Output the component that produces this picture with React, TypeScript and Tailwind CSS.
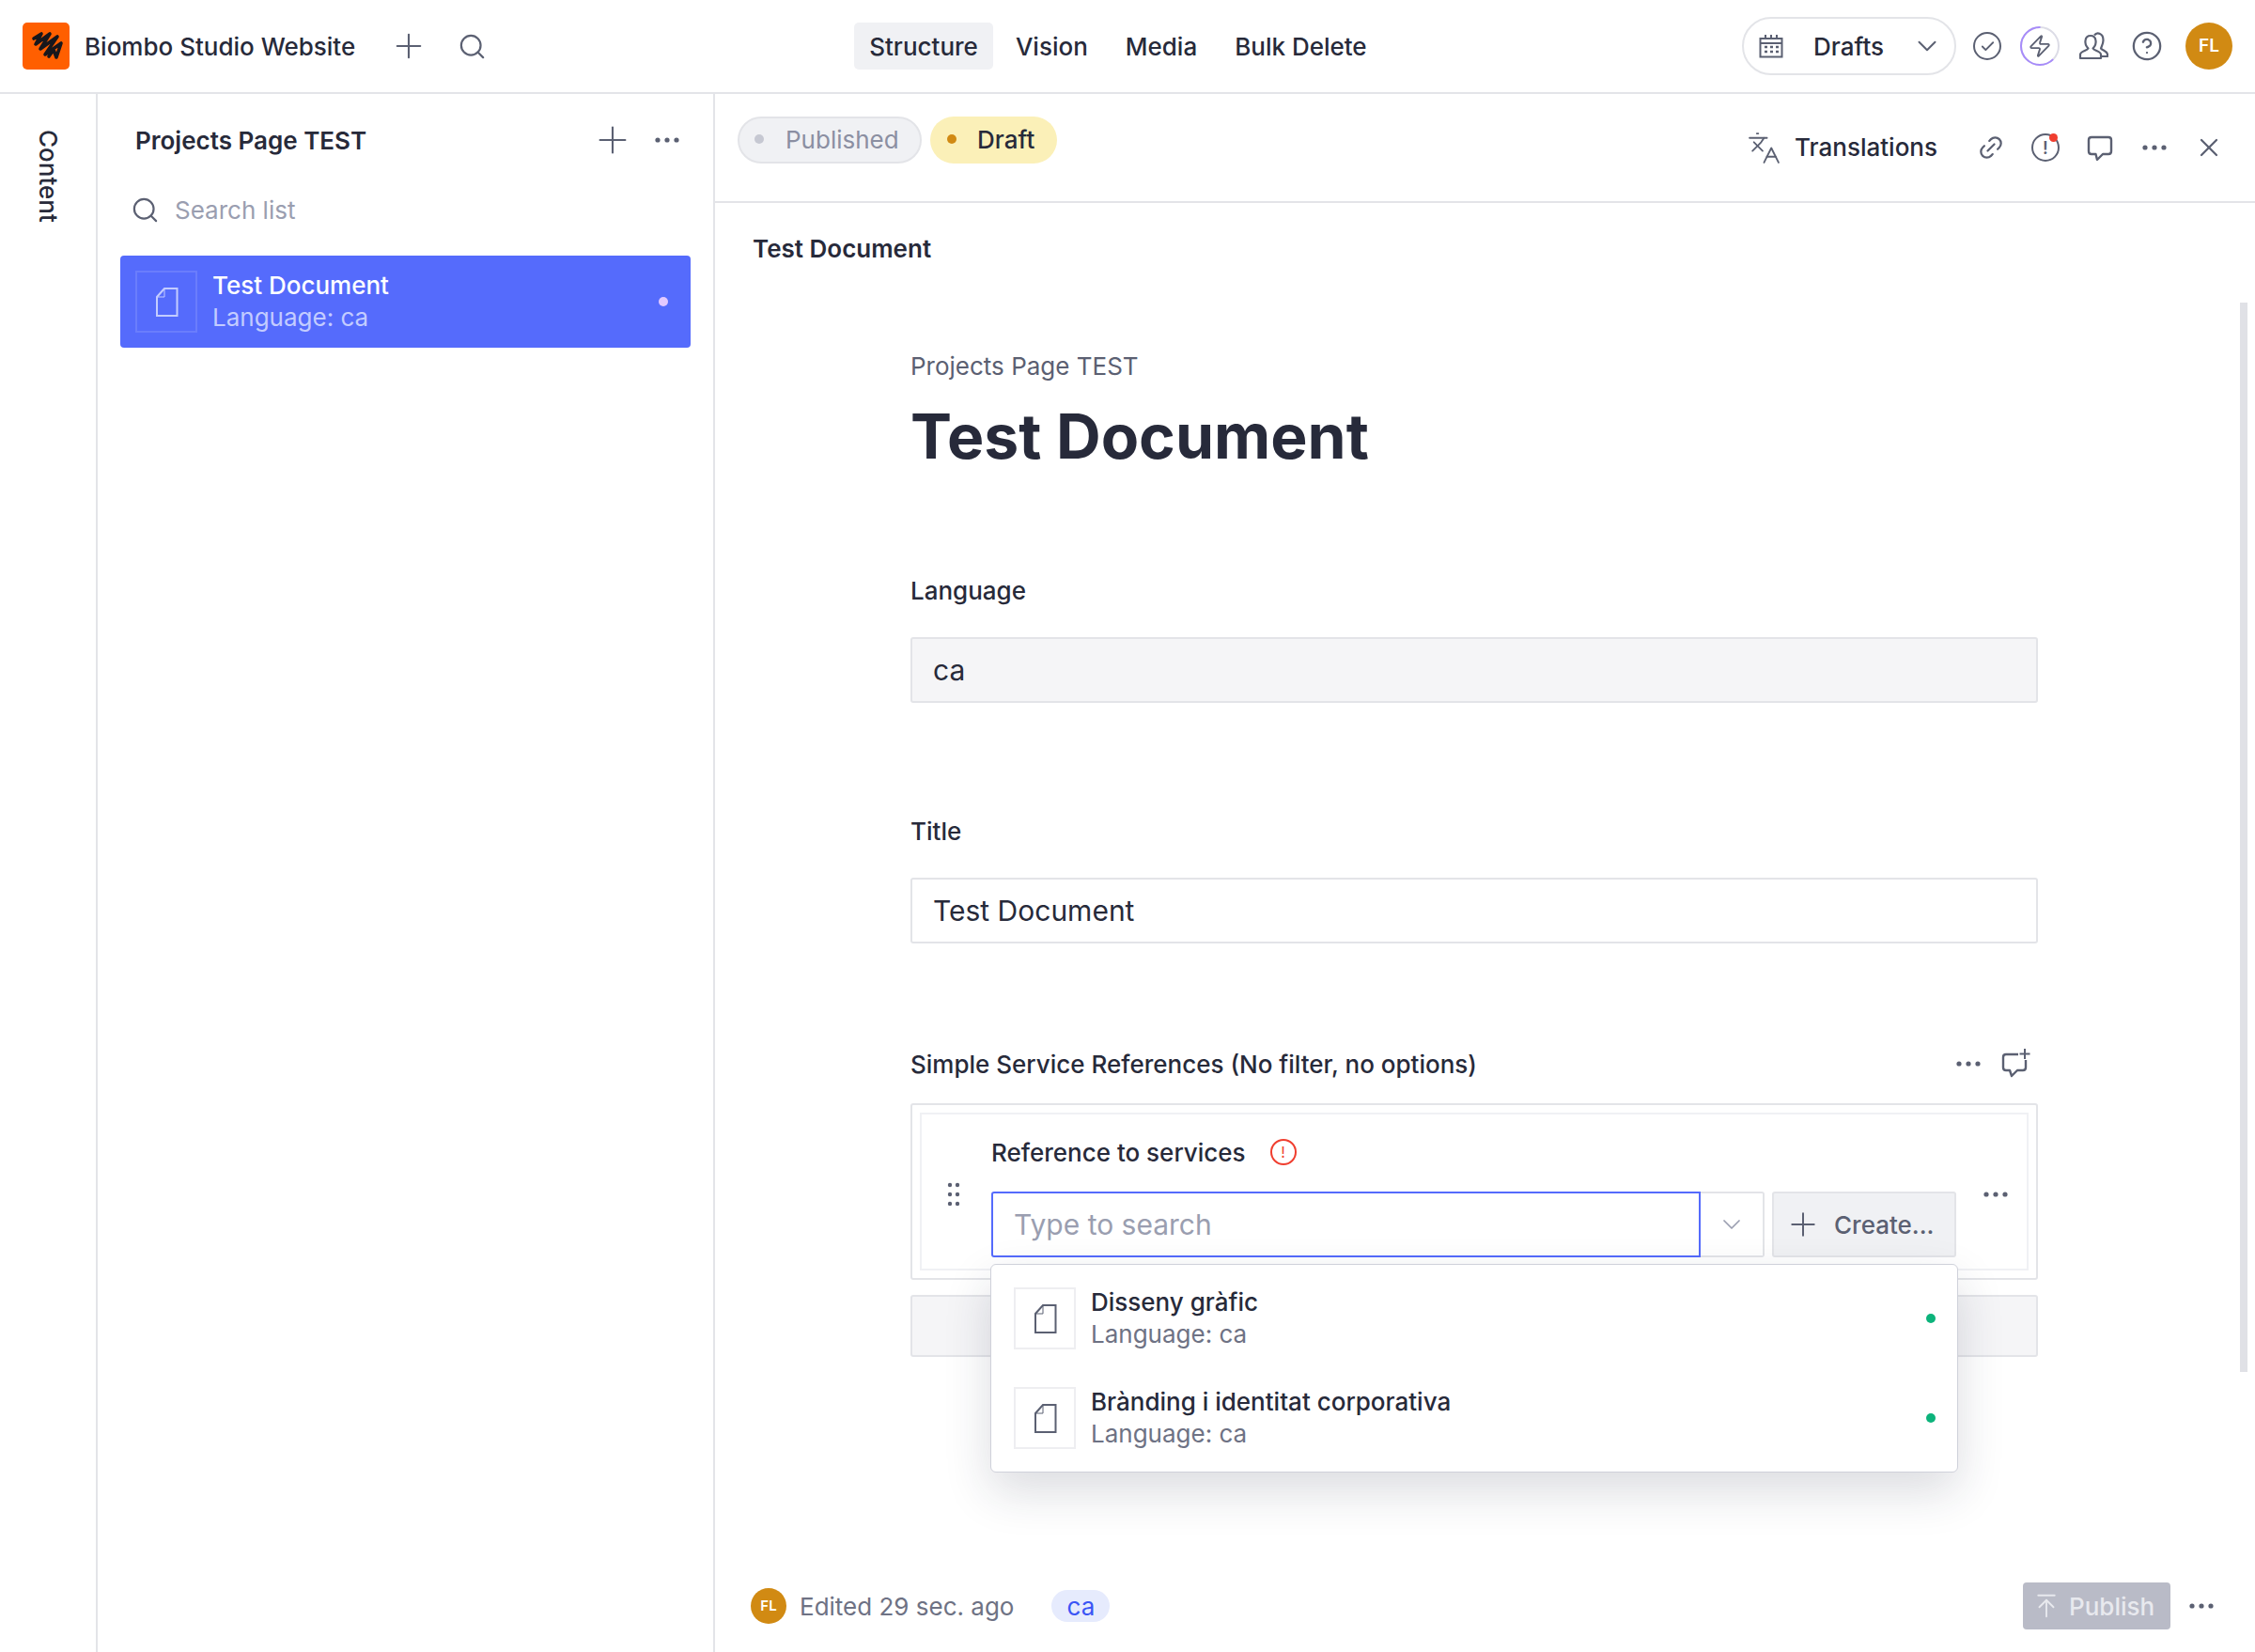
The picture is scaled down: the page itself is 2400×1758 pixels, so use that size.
import { Check, ChevronDown, CircleHelp, Languages, Link2, Plus, Search, X, Zap, ArrowUpToLine } from 'lucide-react';

function DocIcon({ className }: { className?: string }) {
    return (
        <svg viewBox="0 0 25 33" fill="none" stroke="currentColor" strokeWidth="2" className={className}>
            <path d="M10 2H23.5V31H2V11L10 2Z" />
            <path d="M10 2V11H2" strokeWidth="1" />
        </svg>
    );
}

function Dots({ className }: { className?: string }) {
    return (
        <svg viewBox="0 0 26 6" fill="currentColor" className={`w-[26px] h-[6px] shrink-0 ${className ?? ''}`}>
            <circle cx="3" cy="3" r="2.6" /><circle cx="13" cy="3" r="2.6" /><circle cx="23" cy="3" r="2.6" />
        </svg>
    );
}

function Bubble({ className }: { className?: string }) {
    return (
        <svg viewBox="0 0 30 30" fill="none" stroke="currentColor" strokeWidth="2.4" strokeLinejoin="round" className={className}>
            <path d="M6 4H24Q27 4 27 7V19Q27 22 24 22H18L12 28L10.5 22H6Q3 22 3 19V7Q3 4 6 4Z" />
        </svg>
    );
}

function Logo() {
    return (
        <div className="w-[50px] h-[50px] rounded-[5px] bg-[#ff5f00] shrink-0">
            <svg viewBox="0 0 50 50" className="w-[50px] h-[50px]" fill="none" stroke="#17171c" strokeWidth="3.6" strokeLinejoin="round" strokeLinecap="round">
                <path d="M12 17L20 12L14 23L29 12L19 28L37 15L24 34L41 22L36 37L33 29L28 36" />
            </svg>
        </div>
    );
}

function Doc({ title }: { title: string }) {
    return (
        <div className="flex items-center h-[70px] pl-6 pr-[23px]">
            <div className="w-[66px] h-[66px] border-2 border-[#eeeef1] flex items-center justify-center text-[#5b6072]">
                <DocIcon className="w-[25px] h-[33px]" />
            </div>
            <div className="ml-4 flex-1">
                <div className="text-[26px] leading-[34px] font-medium text-[#272a3a]">{title}</div>
                <div className="text-[26px] leading-[34px] text-[#6e7284]">Language: ca</div>
            </div>
            <div className="w-[10px] h-[10px] rounded-full bg-[#0cb37b]" />
        </div>
    );
}

export default function App() {
    return (
        <div className="relative w-[2400px] h-[1758px] overflow-hidden bg-white font-['Inter',sans-serif] text-[#272a3a]">
            {/* top bar */}
            <header className="h-[100px] border-b-2 border-[#e3e4e8] flex items-center pl-6 pr-6">
                <Logo />
                <div className="ml-4 text-[26px] font-medium whitespace-nowrap">Biombo Studio Website</div>
                <Plus className="ml-[36px] w-[42px] h-[42px] text-[#5b6072]" strokeWidth={1.2} />
                <Search className="ml-[31px] w-[31px] h-[31px] text-[#5b6072]" strokeWidth={1.7} />
                <nav className="ml-[391px] flex items-center gap-2 text-[26px] font-medium">
                    <div className="h-[50px] px-4 flex items-center bg-[#f0f1f4] rounded-[5px]">Structure</div>
                    <div className="h-[50px] px-[16px] flex items-center">Vision</div>
                    <div className="h-[50px] px-[16px] flex items-center">Media</div>
                    <div className="h-[50px] px-[16px] flex items-center">Bulk Delete</div>
                </nav>
                <div className="ml-auto flex items-center">
                    <div className="w-[228px] h-[62px] rounded-full border-2 border-[#e3e4e8] flex items-center pl-[16px] pr-[12px] mr-[18px]">
                        <svg viewBox="0 0 26 26" className="w-[26px] h-[26px] text-[#5b6072]" fill="none" stroke="currentColor" strokeWidth="2">
                            <path d="M1.5 5H24.5V24.5H1.5ZM1.5 10H24.5M7 1V6M13 1V6M19 1V6" />
                            <path d="M6 14H9M12 14H15M18 14H21M6 19H9M12 19H15M18 19H21" strokeWidth="2.5" />
                        </svg>
                        <span className="ml-[32px] text-[26px] font-medium">Drafts</span>
                        <ChevronDown className="ml-auto w-[34px] h-[34px] text-[#5b6072]" strokeWidth={1.4} />
                    </div>
                    <div className="w-[30px] h-[30px] rounded-full border-2 border-[#5b6072] flex items-center justify-center text-[#5b6072]">
                        <Check className="w-[17px] h-[17px]" strokeWidth={2.6} />
                    </div>
                    <div className="relative ml-[19px] w-[44px] h-[44px] flex items-center justify-center text-[#5b6072]">
                        <svg viewBox="0 0 44 44" className="absolute inset-0 w-[44px] h-[44px]" fill="none" strokeWidth="2">
                            <circle cx="22" cy="22" r="20" stroke="#dcdce6" />
                            <circle cx="22" cy="22" r="20" stroke="#a78bfa" strokeDasharray="78.5 125.7" transform="rotate(45 22 22)" />
                        </svg>
                        <Zap className="w-[26px] h-[26px]" strokeWidth={1.7} />
                    </div>
                    <svg viewBox="0 0 32 30" className="ml-[19px] w-[32px] h-[30px] text-[#5b6072]" fill="none" stroke="currentColor" strokeWidth="2.2" strokeLinejoin="round">
                        <path d="M2 28V24C2 20.5 9 20 10.5 17.5C8 15 7 12 7.5 9C8 5.5 10.5 4 13 4C15.5 4 18 5.5 18.5 9C19 12 18 15 15.5 17.5C17 20 24 20.5 24 24V28Z" />
                        <path d="M17 3.5C18.5 1.5 21 1 23 2C25.5 3 26.5 6 26.5 9C26.5 12 25 15 24 17.5C26 20 31 20.5 31 24V26H24" />
                    </svg>
                    <CircleHelp className="ml-[24px] w-[34px] h-[34px] text-[#5b6072]" strokeWidth={1.6} />
                    <div className="ml-[24px] w-[50px] h-[50px] rounded-full bg-[#d18a13] text-white text-[19px] font-semibold flex items-center justify-center">FL</div>
                </div>
            </header>

            <div className="flex h-[1658px]">
                {/* rail */}
                <aside className="w-[104px] border-r-2 border-[#e3e4e8] flex justify-center pt-[38px]">
                    <span className="[writing-mode:vertical-rl] text-[26px] font-medium leading-none">Content</span>
                </aside>

                {/* list pane */}
                <section className="w-[657px] border-r-2 border-[#e3e4e8] flex flex-col">
                    <div className="h-[98px] flex items-center pl-[40px] pr-[36px]">
                        <div className="text-[26px] font-semibold">Projects Page TEST</div>
                        <Plus className="ml-auto w-[46px] h-[46px] text-[#5b6072]" strokeWidth={1.1} />
                        <Dots className="ml-[22px] text-[#5b6072]" />
                    </div>
                    <div className="h-[50px] flex items-center pl-[35px]">
                        <Search className="w-[31px] h-[31px] text-[#5b6072]" strokeWidth={1.7} />
                        <span className="ml-[16px] text-[26px] text-[#9a9eb0]">Search list</span>
                    </div>
                    <div className="mt-6 ml-6 w-[607px] h-[98px] rounded-[4px] bg-[#556bfc] flex items-center pl-[16px] pr-[24px]">
                        <div className="w-[66px] h-[66px] border-2 border-[#6a7dfc] flex items-center justify-center text-[#c3ccff]">
                            <DocIcon className="w-[25px] h-[33px]" />
                        </div>
                        <div className="ml-4 flex-1">
                            <div className="text-[26px] leading-[34px] font-medium text-white">Test Document</div>
                            <div className="text-[26px] leading-[34px] text-[#c3ccff]">Language: ca</div>
                        </div>
                        <div className="w-[10px] h-[10px] rounded-full bg-[#e3c9ff]" />
                    </div>
                </section>

                {/* document pane */}
                <main className="flex-1 flex flex-col">
                    <div className="h-[116px] border-b-2 border-[#e3e4e8] flex pl-6 pr-[33px]">
                        <div className="flex gap-[9px] pt-6">
                            <div className="h-[50px] w-[196px] rounded-full border-2 border-[#e3e4e8] bg-[#f0f1f4] flex items-center pl-[16px] pb-[2px] text-[26px] text-[#8b8fa2]">
                                <span className="w-[10px] h-[10px] rounded-full bg-[#c6c8d2]" />
                                <span className="ml-[23px]">Published</span>
                            </div>
                            <div className="h-[50px] w-[135px] rounded-full bg-[#fbf0b8] flex items-center pl-[18px] pb-[2px] text-[26px] font-medium">
                                <span className="w-[10px] h-[10px] rounded-full bg-[#d18a13]" />
                                <span className="ml-[22px]">Draft</span>
                            </div>
                        </div>
                        <div className="ml-auto flex items-center text-[#5b6072]">
                            <Languages className="w-[37px] h-[37px]" strokeWidth={1.2} />
                            <span className="ml-[14px] pb-[2px] text-[26px] font-medium text-[#272a3a]">Translations</span>
                            <Link2 className="ml-[42px] w-[30px] h-[30px] -rotate-45" strokeWidth={1.8} />
                            <div className="relative ml-[28px] w-[30px] h-[30px] rounded-full border-2 border-[#5b6072] flex items-center justify-center text-[18px] font-semibold">
                                !
                                <span className="absolute -top-[2px] right-0 w-[9px] h-[9px] rounded-full bg-[#f03e2f]" />
                            </div>
                            <Bubble className="ml-[28px] w-[30px] h-[30px]" />
                            <Dots className="ml-[30px]" />
                            <X className="ml-[29px] w-[32px] h-[32px]" strokeWidth={1.7} />
                        </div>
                    </div>

                    <div className="pt-[32px] pl-10 text-[26px] leading-[34px] font-semibold">Test Document</div>

                    <div className="relative w-[1200px] ml-[208px] flex flex-col">
                        <div className="mt-[91px] text-[26px] leading-[34px] text-[#5b6072]">Projects Page TEST</div>
                        <h1 className="mt-[17px] text-[66px] leading-[80px] font-bold">Test Document</h1>

                        <div className="mt-[108px] text-[26px] leading-[34px] font-medium">Language</div>
                        <div className="mt-[32px] h-[70px] rounded-[3px] border-2 border-[#e3e4e8] bg-[#f5f5f7] flex items-center px-[22px] text-[30px]">ca</div>

                        <div className="mt-[120px] text-[26px] leading-[34px] font-medium">Title</div>
                        <div className="mt-[32px] h-[70px] rounded-[3px] border-2 border-[#e3e4e8] flex items-center px-[22px] text-[30px]">Test Document</div>

                        <div className="mt-[111px] h-[34px] flex items-center">
                            <div className="text-[26px] font-medium">Simple Service References (No filter, no options)</div>
                            <Dots className="ml-auto text-[#5b6072]" />
                            <svg viewBox="0 0 34 34" className="ml-[20px] mr-[7px] w-[34px] h-[34px] text-[#5b6072]" fill="none" stroke="currentColor" strokeWidth="2.4" strokeLinejoin="round">
                                <path d="M20 7H7Q4 7 4 10V21Q4 24 7 24H11L13 30L19 24H25Q28 24 28 21V13" />
                                <path d="M27 1V12M21.5 6.5H32.5" strokeWidth="2" />
                            </svg>
                        </div>

                        <div className="mt-[25px] h-[188px] rounded-[3px] border-2 border-[#e3e4e8] p-2">
                            <div className="h-full border-2 border-[#f0f1f4] flex">
                                <div className="w-[74px] pt-[72px] pr-[7px] flex justify-center text-[#5b6072]">
                                    <svg viewBox="0 0 14 26" className="w-[14px] h-[26px]" fill="currentColor">
                                        <circle cx="3" cy="3" r="2.2" /><circle cx="11" cy="3" r="2.2" />
                                        <circle cx="3" cy="13" r="2.2" /><circle cx="11" cy="13" r="2.2" />
                                        <circle cx="3" cy="23" r="2.2" /><circle cx="11" cy="23" r="2.2" />
                                    </svg>
                                </div>
                                <div className="flex-1">
                                    <div className="mt-[23px] h-[34px] flex items-center">
                                        <span className="text-[26px] font-medium">Reference to services</span>
                                        <div className="ml-[26px] w-[28px] h-[28px] rounded-full border-2 border-[#f03e2f] flex items-center justify-center text-[16px] text-[#f03e2f]">!</div>
                                    </div>
                                    <div className="mt-[25px] flex items-start">
                                        <div className="w-[755px] h-[70px] rounded-l-[3px] border-2 border-[#556bfc] flex items-center px-[22px] text-[30px] text-[#9a9eb0]">Type to search</div>
                                        <div className="w-[68px] h-[70px] rounded-r-[3px] border-2 border-l-0 border-[#e3e4e8] flex items-center justify-center text-[#9a9eb0]">
                                            <ChevronDown className="w-[32px] h-[32px]" strokeWidth={1.3} />
                                        </div>
                                        <div className="ml-2 w-[196px] h-[70px] rounded-[3px] border-2 border-[#e3e4e8] bg-[#f0f1f4] flex items-center pl-[11px] text-[26px] font-medium text-[#5b6072]">
                                            <Plus className="w-[40px] h-[40px]" strokeWidth={1.2} />
                                            <span className="ml-[13px]">Create...</span>
                                        </div>
                                        <Dots className="ml-[29px] text-[#5b6072]" />
                                    </div>
                                </div>
                            </div>
                        </div>

                        <div className="mt-4 h-[66px] rounded-[3px] border-2 border-[#e3e4e8] bg-[#f5f5f7]" />

                        {/* dropdown */}
                        <div className="absolute left-[85px] top-[1063px] w-[1030px] h-[222px] rounded-[6px] border border-[#cfd1da] bg-white shadow-[0_20px_50px_rgba(30,35,60,0.16)] flex flex-col pt-[22px] gap-[36px]">
                            <Doc title="Disseny gràfic" />
                            <Doc title="Brànding i identitat corporativa" />
                        </div>
                    </div>

                    <footer className="mt-auto h-[98px] flex items-center pl-[38px] pr-[44px]">
                        <div className="w-[38px] h-[38px] rounded-full bg-[#d18a13] text-white text-[15px] font-semibold flex items-center justify-center">FL</div>
                        <span className="ml-[14px] text-[26px] text-[#6e7284]">Edited 29 sec. ago</span>
                        <span className="ml-[40px] w-[62px] h-[34px] rounded-full bg-[#e6ebfd] flex items-center justify-center text-[26px] text-[#3a55f5]">ca</span>
                        <div className="ml-auto w-[157px] h-[50px] rounded-[4px] bg-[#b9bbc7] flex items-center pl-[10px] text-[#e8e9ee]">
                            <ArrowUpToLine className="w-[30px] h-[30px]" strokeWidth={1.5} />
                            <span className="ml-[9px] text-[26px] font-medium">Publish</span>
                        </div>
                        <Dots className="ml-5 text-[#5b6072]" />
                    </footer>
                </main>
            </div>

            {/* scrollbar */}
            <div className="absolute right-2 top-[322px] w-2 h-[1138px] bg-[#e0e1e6]" />
        </div>
    );
}
